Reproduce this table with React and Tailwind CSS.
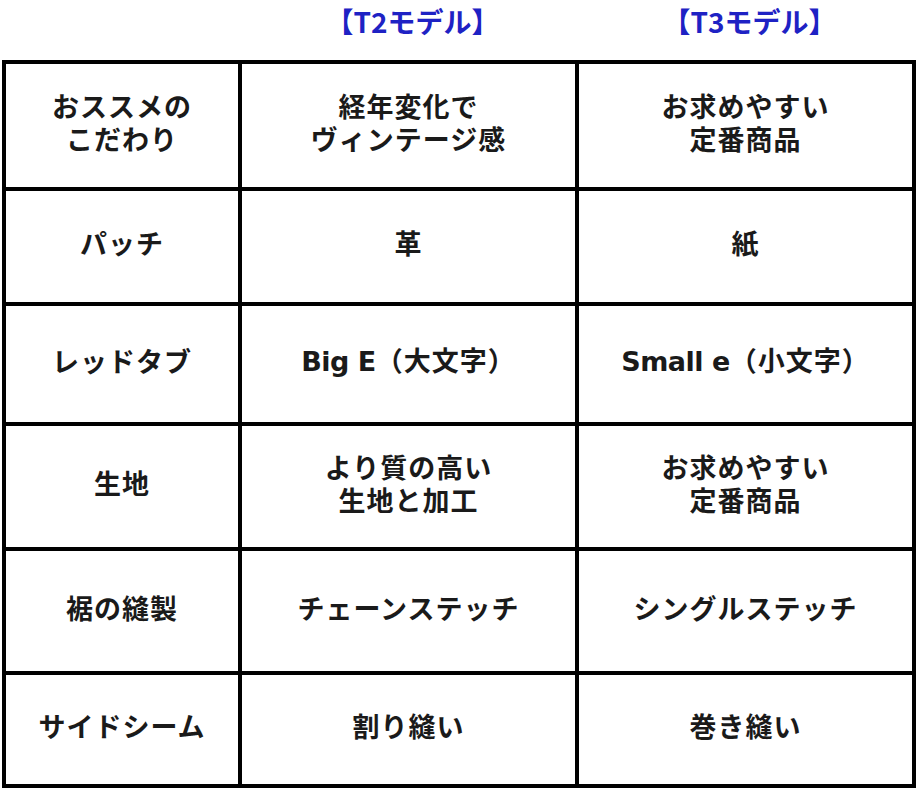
const rows = [
  ["おススメの\nこだわり", "経年変化で\nヴィンテージ感", "お求めやすい\n定番商品", "h-[123px]"],
  ["パッチ", "革", "紙", "h-[111px]"],
  ["レッドタブ", ["Big E", "（大文字）"], ["Small e", "（小文字）"], "h-[116px]"],
  ["生地", "より質の高い\n生地と加工", "お求めやすい\n定番商品", "h-[121px]"],
  ["裾の縫製", "チェーンステッチ", "シングルステッチ", "h-[120px]"],
  ["サイドシーム", "割り縫い", "巻き縫い", "h-[109px]"],
];

function Cell({ text, h }) {
  return (
    <div
      className={`${h} bg-white flex items-center justify-center pb-2 text-center whitespace-pre-line text-[27px] leading-[33px] font-bold tracking-[1px] text-[#1a1a1a]`}
    >
      {Array.isArray(text) ? (
        <span>
          <span className="text-[27px] tracking-[-0.5px]" style={{ fontFamily: '"DejaVu Sans", sans-serif' }}>
            {text[0]}
          </span>
          {text[1]}
        </span>
      ) : (
        text
      )}
    </div>
  );
}

export default function App() {
  return (
    <div
      className="w-[919px] h-[794px] bg-white overflow-hidden"
      style={{ fontFamily: '"Noto Sans CJK JP", "Noto Sans", sans-serif' }}
    >
      <div className="h-[60px] grid grid-cols-[242px_337px_337px] pl-[2px] pb-[18px]">
        <div />
        <div className="flex items-center justify-center text-[28px] font-bold text-[#1e22c4]">
          【T2モデル】
        </div>
        <div className="flex items-center justify-center text-[28px] font-bold text-[#1e22c4]">
          【T3モデル】
        </div>
      </div>
      <div className="ml-[2px] w-[914px] bg-black p-1 grid grid-cols-[232px_333px_333px] gap-1">
        {rows.map((r, i) => (
          <div key={i} className="contents">
            <Cell text={r[0]} h={r[3]} />
            <Cell text={r[1]} h={r[3]} />
            <Cell text={r[2]} h={r[3]} />
          </div>
        ))}
      </div>
    </div>
  );
}
